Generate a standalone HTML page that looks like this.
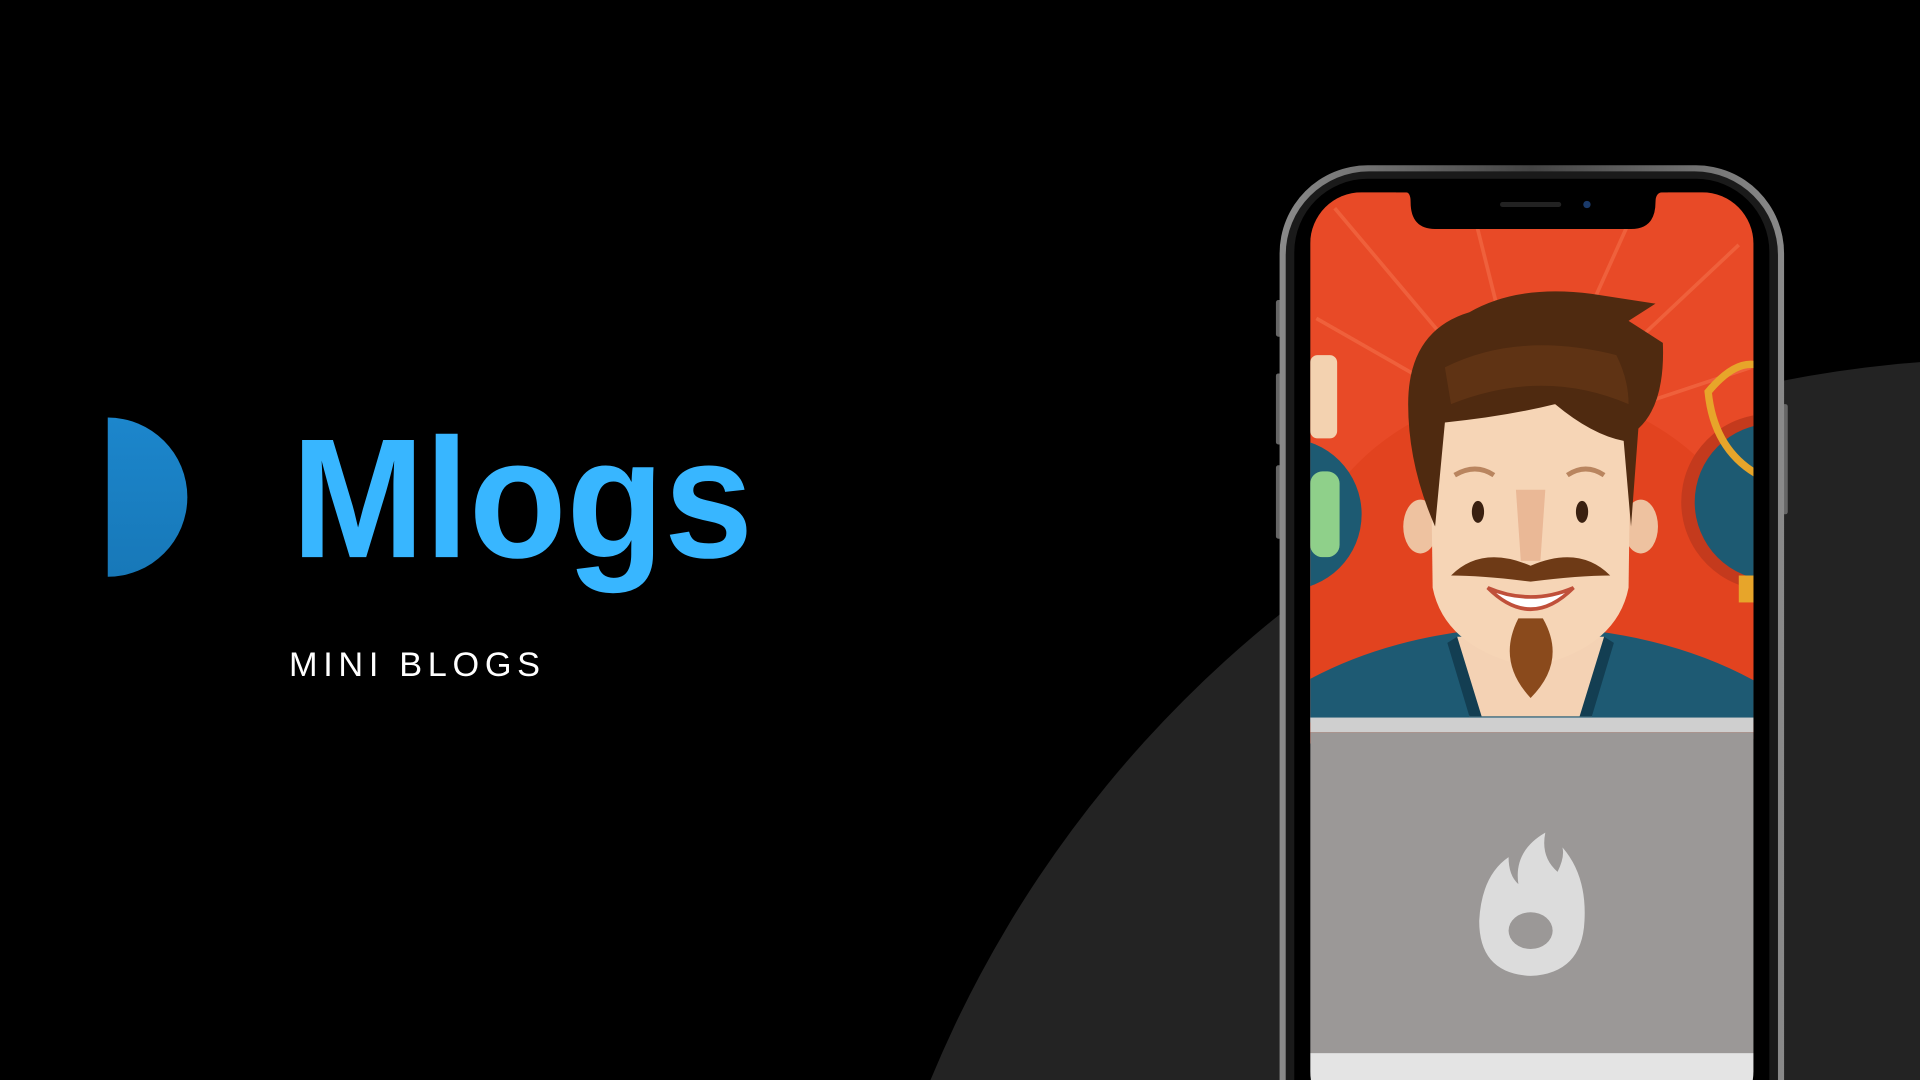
<!DOCTYPE html>
<html><head><meta charset="utf-8"><style>
html,body{margin:0;padding:0;background:#000;width:1920px;height:1080px;overflow:hidden}
svg{display:block}
</style></head><body>
<svg width="1920" height="1080" viewBox="0 0 1568 882" xmlns="http://www.w3.org/2000/svg">
<defs>
<linearGradient id="hc" x1="0" y1="0" x2="0" y2="1"><stop offset="0" stop-color="#1c86cc"/><stop offset="1" stop-color="#1778b8"/></linearGradient>
<clipPath id="scr"><rect x="1070" y="157" width="362" height="760" rx="42"/></clipPath>
<linearGradient id="fr" x1="0" y1="0" x2="1" y2="0"><stop offset="0" stop-color="#8a8a8a"/><stop offset=".5" stop-color="#444"/><stop offset="1" stop-color="#8a8a8a"/></linearGradient>
</defs>
<rect width="1568" height="882" fill="#000"/>
<circle cx="1640" cy="1245" r="952" fill="#232323"/>
<path d="M88,341 A65,65 0 0 1 88,471 Z" fill="url(#hc)"/>
<text x="238" y="455" font-family="Liberation Sans, sans-serif" font-weight="700" font-size="139" fill="#38b6ff" textLength="377" lengthAdjust="spacingAndGlyphs">Mlogs</text>
<text x="236" y="552" font-family="Liberation Sans, sans-serif" font-size="28" fill="#fff" textLength="205" lengthAdjust="spacing">MINI BLOGS</text>
<!-- phone -->
<rect x="1042" y="245" width="6" height="30" rx="2" fill="#666"/>
<rect x="1042" y="305" width="6" height="58" rx="2" fill="#666"/>
<rect x="1042" y="380" width="6" height="60" rx="2" fill="#666"/>
<rect x="1454" y="330" width="6" height="90" rx="2" fill="#666"/>
<rect x="1045" y="135" width="412" height="820" rx="72" fill="url(#fr)"/>
<rect x="1050" y="140" width="402" height="810" rx="68" fill="#1a1a1a"/>
<rect x="1057" y="146" width="388" height="800" rx="60" fill="#000"/>
<g clip-path="url(#scr)">
<rect x="1070" y="157" width="362" height="430" fill="#e84a27"/>
<g stroke="#f26a45" stroke-width="3" opacity=".7">
<line x1="1250" y1="360" x2="1090" y2="170"/><line x1="1250" y1="360" x2="1200" y2="160"/>
<line x1="1250" y1="360" x2="1340" y2="160"/><line x1="1250" y1="360" x2="1420" y2="200"/>
<line x1="1250" y1="360" x2="1075" y2="260"/><line x1="1250" y1="360" x2="1430" y2="300"/>
</g>
<circle cx="1250" cy="520" r="200" fill="#e2431f"/>
<circle cx="1050" cy="420" r="62" fill="#1d5a72"/>
<rect x="1070" y="385" width="24" height="70" rx="10" fill="#8fd08a"/>
<rect x="1070" y="290" width="22" height="68" rx="6" fill="#f3d2b0"/>
<circle cx="1445" cy="410" r="72" fill="#c43a1d"/>
<circle cx="1448" cy="410" r="64" fill="#1d5a72"/>
<path d="M1395,320 Q1420,290 1440,300 L1440,390 Q1400,370 1395,320 Z" fill="none" stroke="#e7a52a" stroke-width="6"/>
<rect x="1420" y="470" width="14" height="22" fill="#e7a52a"/>
<!-- body -->
<path d="M1060,560 Q1120,525 1200,515 L1300,515 Q1380,525 1440,560 L1440,590 L1060,590 Z" fill="#1e5a73"/>
<path d="M1190,520 L1310,520 L1300,585 L1200,585 Z" fill="#f4d2b4"/>
<path d="M1190,520 L1210,585 L1200,585 L1182,525 Z M1310,520 L1290,585 L1300,585 L1318,525 Z" fill="#133e52"/>
<!-- face -->
<ellipse cx="1160" cy="430" rx="14" ry="22" fill="#eec2a0"/>
<ellipse cx="1340" cy="430" rx="14" ry="22" fill="#eec2a0"/>
<path d="M1168,330 L1332,330 L1330,480 Q1320,530 1250,545 Q1180,530 1170,480 Z" fill="#f6d5b6"/>
<path d="M1238,400 L1262,400 L1258,458 L1242,458 Z" fill="#eab896"/>
<path d="M1150,330 Q1150,270 1200,255 Q1240,232 1300,240 L1352,248 L1330,262 L1358,280 Q1360,330 1338,350 L1332,430 L1326,360 Q1300,355 1270,330 Q1230,340 1180,345 L1172,430 Q1150,380 1150,330 Z" fill="#4f2a10"/>
<path d="M1180,300 Q1240,270 1320,290 Q1330,310 1330,330 Q1260,300 1185,330 Z" fill="#6b3a17" opacity=".6"/>
<path d="M1188,388 Q1205,378 1220,388" stroke="#b9855f" stroke-width="4" fill="none"/>
<path d="M1280,388 Q1295,378 1310,388" stroke="#b9855f" stroke-width="4" fill="none"/>
<ellipse cx="1207" cy="418" rx="5" ry="9" fill="#3a2010"/>
<ellipse cx="1292" cy="418" rx="5" ry="9" fill="#3a2010"/>
<path d="M1215,480 Q1250,515 1285,480 Q1250,495 1215,480 Z" fill="#fff" stroke="#c0503a" stroke-width="3"/>
<path d="M1185,470 Q1210,445 1250,462 Q1290,445 1315,470 Q1290,470 1250,475 Q1210,470 1185,470 Z" fill="#6e3a16"/>
<path d="M1240,505 L1260,505 Q1280,540 1250,570 Q1222,540 1240,505 Z" fill="#8a4a1c"/>
</g>
<g clip-path="url(#scr)">
<rect x="1070" y="586" width="362" height="12" fill="#cfcfcf"/>
<rect x="1070" y="598" width="362" height="262" fill="#9b9897"/>
<rect x="1070" y="860" width="362" height="60" fill="#e4e4e4"/>
<path d="M1250,797 Q1208,795 1208,752 Q1210,715 1232,700 Q1232,715 1240,722 Q1236,695 1262,680 Q1258,700 1272,712 Q1278,700 1276,692 Q1296,715 1294,752 Q1292,795 1250,797 Z" fill="#dcdcdc"/>
<ellipse cx="1250" cy="760" rx="18" ry="15" fill="#9b9897"/>
</g>
<path d="M1140,157 L1148,157 Q1152,157 1152,165 Q1152,187 1172,187 L1332,187 Q1352,187 1352,165 Q1352,157 1358,157 L1362,157 L1362,150 L1140,150 Z" fill="#000"/>
<rect x="1225" y="165" width="50" height="4" rx="2" fill="#222"/>
<circle cx="1296" cy="167" r="3" fill="#1a3a6a"/>
</svg>
</body></html>
